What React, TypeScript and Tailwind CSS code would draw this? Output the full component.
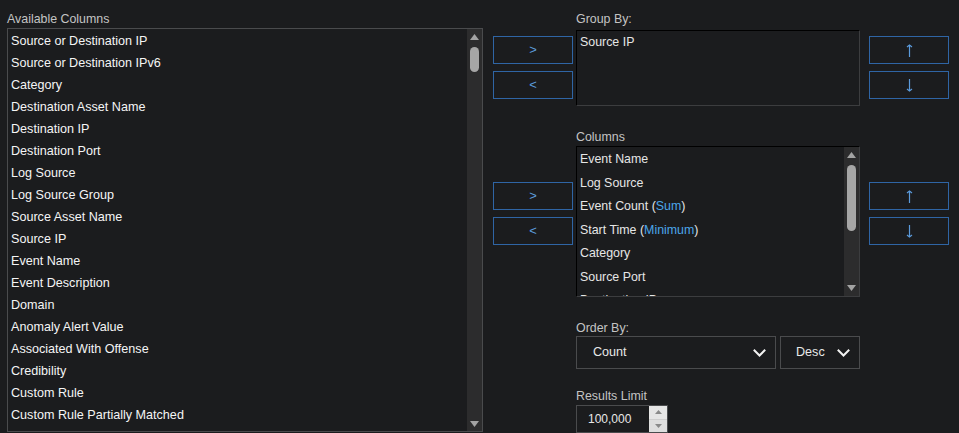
import React from "react";

const font = { fontFamily: '"Liberation Sans", Arial, sans-serif' };

const available = [
  "Source or Destination IP",
  "Source or Destination IPv6",
  "Category",
  "Destination Asset Name",
  "Destination IP",
  "Destination Port",
  "Log Source",
  "Log Source Group",
  "Source Asset Name",
  "Source IP",
  "Event Name",
  "Event Description",
  "Domain",
  "Anomaly Alert Value",
  "Associated With Offense",
  "Credibility",
  "Custom Rule",
  "Custom Rule Partially Matched",
];

const columns: { name: string; agg?: string }[] = [
  { name: "Event Name" },
  { name: "Log Source" },
  { name: "Event Count", agg: "Sum" },
  { name: "Start Time", agg: "Minimum" },
  { name: "Category" },
  { name: "Source Port" },
  { name: "Destination IP" },
];

function TriUp() {
  return (
    <svg width="9" height="6" viewBox="0 0 9 6">
      <polygon points="4.5,0 9,6 0,6" fill="#a3a3a3" />
    </svg>
  );
}
function TriDown() {
  return (
    <svg width="9" height="6" viewBox="0 0 9 6">
      <polygon points="0,0 9,0 4.5,6" fill="#a3a3a3" />
    </svg>
  );
}

function Scrollbar({ thumb, bottom }: { thumb: number; bottom: number }) {
  return (
    <div className="w-[15px] shrink-0 bg-[#2c2c2d] flex flex-col items-center">
      <div className="h-[16px] flex items-center justify-center">
        <TriUp />
      </div>
      <div className="mt-[2px] w-[9px] rounded-full bg-[#a6a6a6]" style={{ height: thumb }} />
      <div className="flex-1" />
      <div className="flex items-center justify-center" style={{ height: bottom }}>
        <TriDown />
      </div>
    </div>
  );
}

function ArrowBtn({ children }: { children: React.ReactNode }) {
  return (
    <div className="h-[28px] w-[80px] border border-[#2f65a5] flex items-center justify-center text-[13px] text-[#5b9bdc]">
      {children}
    </div>
  );
}

function UpArrow() {
  return (
    <svg width="9" height="13" viewBox="0 0 9 13" fill="none" stroke="#5b9bdc" strokeWidth="1.2">
      <line x1="4.5" y1="1" x2="4.5" y2="13" />
      <polyline points="2,3 4.5,1 7,3" />
    </svg>
  );
}
function DownArrow() {
  return (
    <svg width="9" height="13" viewBox="0 0 9 13" fill="none" stroke="#5b9bdc" strokeWidth="1.2">
      <line x1="4.5" y1="0" x2="4.5" y2="12" />
      <polyline points="2,10 4.5,12 7,10" />
    </svg>
  );
}

function Chevron() {
  return (
    <svg width="13" height="8" viewBox="0 0 13 8" fill="none" stroke="#f2f2f2" strokeWidth="2" strokeLinecap="square">
      <polyline points="1.5,1.5 6.5,6.5 11.5,1.5" />
    </svg>
  );
}

function Label({ children, mb }: { children: React.ReactNode; mb: string }) {
  return (
    <div className={`h-[15px] leading-[15px] text-[12.4px] text-[#c4c4c4] ${mb}`}>{children}</div>
  );
}

export default function App() {
  return (
    <div
      className="w-[959px] h-[433px] overflow-hidden bg-[#1b1c1e] flex pl-[7px] pt-[12px]"
      style={font}
    >
      {/* Available columns */}
      <div className="w-[476px] shrink-0 flex flex-col">
        <div className="h-[15px] leading-[15px] text-[12.4px] text-[#c4c4c4] mb-[1px]">Available Columns</div>
        <div className="h-[404px] border border-[#4a4b4d] flex overflow-hidden">
          <div className="flex-1 pt-[1px] pl-[3px] overflow-hidden">
            {available.map((a) => (
              <div key={a} className="h-[22px] leading-[22px] text-[12.6px] text-[#f5f5f5] whitespace-nowrap">
                {a}
              </div>
            ))}
          </div>
          <Scrollbar thumb={25} bottom={15} />
        </div>
      </div>

      <div className="ml-[10px] flex flex-col">
        {/* Group By row */}
        <div className="flex">
          <div className="w-[80px] pt-[24px] flex flex-col gap-[7px]">
            <ArrowBtn>&gt;</ArrowBtn>
            <ArrowBtn>&lt;</ArrowBtn>
          </div>
          <div className="ml-[3px] w-[284px] flex flex-col">
            <Label mb="mb-[3px]">Group By:</Label>
            <div className="h-[76px] border border-t-black border-l-black border-r-[#3c3d3f] border-b-[#3c3d3f] pl-[3px]">
              <div className="h-[23.5px] leading-[23.5px] text-[12.4px] text-[#e6e6e6]">Source IP</div>
            </div>
          </div>
          <div className="ml-[9px] w-[80px] pt-[24px] flex flex-col gap-[7px]">
            <ArrowBtn><UpArrow /></ArrowBtn>
            <ArrowBtn><DownArrow /></ArrowBtn>
          </div>
        </div>

        {/* Columns row */}
        <div className="flex mt-[24px]">
          <div className="w-[80px] pt-[52px] flex flex-col gap-[7px]">
            <ArrowBtn>&gt;</ArrowBtn>
            <ArrowBtn>&lt;</ArrowBtn>
          </div>
          <div className="ml-[3px] w-[284px] flex flex-col">
            <Label mb="mb-[1px]">Columns</Label>
            <div className="h-[151px] border border-t-black border-l-black border-r-[#3c3d3f] border-b-[#3c3d3f] flex overflow-hidden">
              <div className="flex-1 pl-[3px] pt-[1px] overflow-hidden">
                {columns.map((c) => (
                  <div key={c.name} className="h-[23.5px] leading-[23.5px] text-[12.4px] text-[#e6e6e6] whitespace-nowrap">
                    {c.name}
                    {c.agg && (
                      <>
                        {" "}
                        (<span className="text-[#4ba6ea]">{c.agg}</span>)
                      </>
                    )}
                  </div>
                ))}
              </div>
              <Scrollbar thumb={66} bottom={17} />
            </div>
          </div>
          <div className="ml-[9px] w-[80px] pt-[52px] flex flex-col gap-[7px]">
            <ArrowBtn><UpArrow /></ArrowBtn>
            <ArrowBtn><DownArrow /></ArrowBtn>
          </div>
        </div>

        {/* Order by */}
        <div className="ml-[83px] mt-[24px] flex flex-col">
          <Label mb="mb-0">Order By:</Label>
          <div className="flex gap-[4px]">
            <div className="w-[200px] h-[33px] border border-[#4a4b4d] flex items-center justify-between pl-[16px] pr-[9px]">
              <span className="text-[12.6px] text-[#e8e8e8]">Count</span>
              <Chevron />
            </div>
            <div className="w-[80px] h-[33px] border border-[#4a4b4d] flex items-center justify-between pl-[15px] pr-[9px]">
              <span className="text-[12.6px] text-[#e8e8e8]">Desc</span>
              <Chevron />
            </div>
          </div>

          <div className="mt-[20px]">
            <Label mb="mb-[1px]">Results Limit</Label>
          </div>
          <div className="w-[92px] h-[28px] border border-[#4a4b4d] flex">
            <div className="flex-1 pl-[11px] flex items-center text-[12px] text-[#e8e8e8]">100,000</div>
            <div className="w-[18px] flex flex-col">
              <div className="flex-1 bg-[#e6e6e6] flex items-center justify-center border-b border-[#cfcfcf]">
                <svg width="7" height="4" viewBox="0 0 7 4"><polygon points="3.5,0 7,4 0,4" fill="#8a8a8a" /></svg>
              </div>
              <div className="flex-1 bg-[#dedede] flex items-center justify-center">
                <svg width="7" height="4" viewBox="0 0 7 4"><polygon points="0,0 7,0 3.5,4" fill="#8a8a8a" /></svg>
              </div>
            </div>
          </div>
        </div>
      </div>
    </div>
  );
}
